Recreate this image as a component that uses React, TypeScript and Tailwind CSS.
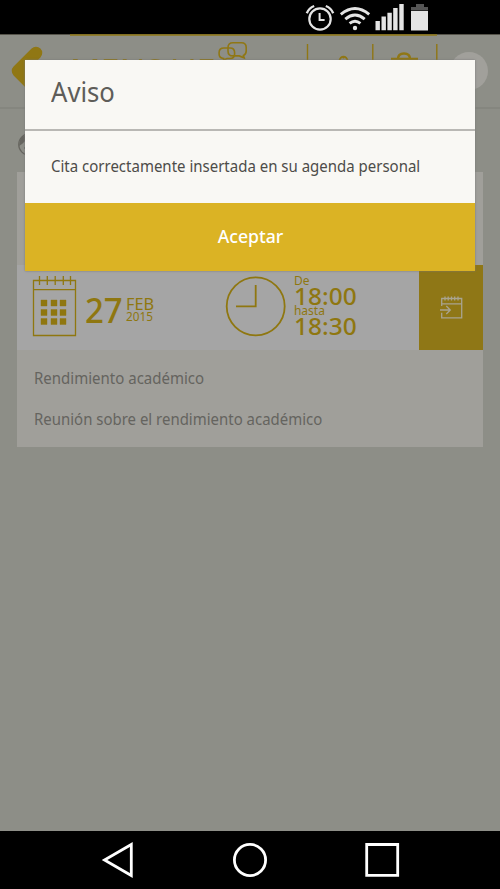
import type { ReactNode } from "react";

function Fit({ className, children }: { className: string; children: ReactNode }) {
  return <span className={"block w-max whitespace-nowrap " + className}>{children}</span>;
}

function StatusBar() {
  return (
    <div className="flex h-[34px] bg-black">
      <svg className="ml-[304px]" width="130" height="34" viewBox="304 0 130 34" fill="none" stroke="#e4e4e4">
        <circle cx="320" cy="19" r="10.7" strokeWidth="2.2" />
        <path d="M319.6 13v7h5" strokeWidth="2" />
        <path d="M306.8 13.2Q309 8 314.2 6M333.2 13.2Q331 8 325.8 6" strokeWidth="2.4" />
        <path d="M340.8 14.3Q355 2.5 369.2 14.3M345.3 19.2Q355 11 364.7 19.2M349.6 23.4Q355 19 360.4 23.4" strokeWidth="2.9" />
        <circle cx="355" cy="28" r="2.2" fill="#e4e4e4" stroke="none" />
        <path d="M375.5 21h4.4v9.3h-4.4zM381.5 16.5h4.4v13.8h-4.4zM387.4 12.7h4.4v17.6h-4.4zM393.2 8h4.4v22.3h-4.4zM399.3 4h4.4v26.3h-4.4z" fill="#e4e4e4" stroke="none" />
        <path d="M411 10.5V7h5V4h8v3h4v3.5z" fill="#555" stroke="none" />
        <path d="M411 11h17v19.5h-17z" fill="#e4e4e4" stroke="none" />
      </svg>
    </div>
  );
}

function Header() {
  return (
    <header className="relative h-[75px] border-b-2 border-[#85867f]">
      <svg className="block" width="500" height="73" viewBox="0 34 500 73" fill="none" stroke="#907714">
        <path d="M0 34.5h500" stroke="#55534a" />
        <path d="M70 35h367" strokeWidth="1.5" />
        <path d="M36 53L18 71L36 89" strokeWidth="12.5" strokeLinecap="round" strokeLinejoin="round" />
        <path d="M233 42.7h8.5q4.7 0 4.7 4.7v3.6q0 3.5-2.8 4.4l.8 2.4-5-1.9h-6.2q-5 0-5-5v-3.4q0-4.8 5-4.8z" strokeWidth="1.6" />
        <path d="M224 48h6q4.6 0 4.6 4.6v1.4q0 4.5-4.6 4.5h-3l-3.5 1.5v-1.5q-4.4-.5-4.4-4.5v-1.4q0-4.6 4.9-4.6z" strokeWidth="1.6" />
        <path d="M307.5 44v48M372.8 44v48M436.8 44v48" strokeWidth="1.4" />
        <path d="M339 61.5q1.5-4.8 4.5-4.8t4.5 4.8M343.5 57v1.5" strokeWidth="1.8" />
        <path d="M391 58.9h27M398 59q0-5.5 6-5.5t6 5.5" strokeWidth="2.4" />
        <circle cx="469" cy="71" r="19" fill="#a1a09b" stroke="none" />
      </svg>
      <Fit className="absolute left-[70px] top-[13px] origin-left scale-x-[1.06] text-[32px] text-[#907714]">MENSAJE</Fit>
    </header>
  );
}

function AvatarIcon() {
  return (
    <svg className="mt-[24px] ml-[18px] block shrink-0" width="23" height="23" viewBox="0 0 23 23" fill="none" stroke="#66655f">
      <circle cx="11.5" cy="11.5" r="10.8" strokeWidth="1.2" />
      <path d="M1 13Q1 2 11.5 1Q22 2 22 13Q18 10 16 5Q9 5 4 11z" fill="#66655f" stroke="none" />
      <path d="M6.5 15h1M15 15h1M8 18.5h7" stroke="#222" strokeWidth="1.2" />
    </svg>
  );
}

function CalendarIcon() {
  return (
    <svg className="mt-[10px] ml-[15px] shrink-0" width="46" height="62" viewBox="32 275 46 62" fill="none" stroke="#8f7710">
      <path d="M33.5 280.5h42v55h-42zM33.5 289.7h42" strokeWidth="1.3" />
      <path d="M39.5 276v9M47.3 276v9M55.2 276v9M63.3 276v9M70.5 276v9" strokeWidth="1.3" />
      <path d="M41 300h6v6h-6zM51 300h6v6h-6zM60 300h6v6h-6zM41 309.5h6v6h-6zM51 309.5h6v6h-6zM60 309.5h6v6h-6zM41 318.5h6v6h-6zM51 318.5h6v6h-6zM60 318.5h6v6h-6z" fill="#8f7710" stroke="#8f7710" strokeWidth=".4" />
    </svg>
  );
}

function Appointment() {
  return (
    <section className="mx-[17px] mt-[16px] h-[275px] w-[466px] shrink-0 bg-[#a09f9a]">
      <div className="h-[93px]" />
      <div className="flex h-[85px] bg-[#a5a5a5] text-[#8f7710]">
        <CalendarIcon />
        <Fit className="ml-[7px] mr-[2px] mt-[24px] origin-left scale-x-[.97] text-[34px] leading-[42px] font-medium">27</Fit>
        <div className="mt-[30px] w-[99px]">
          <Fit className="origin-left scale-x-[.96] text-[17px] leading-[18px]">FEB</Fit>
          <Fit className="origin-left scale-x-[.98] text-[12px] leading-[8px]">2015</Fit>
        </div>
        <svg className="mt-[10px] shrink-0" width="62" height="62" viewBox="225 275 62 62" fill="none" stroke="#8f7710" strokeWidth="1.8">
          <circle cx="255.7" cy="306.3" r="29" />
          <path d="M255.7 285v21.3H236" />
        </svg>
        <div className="ml-[7px] mt-[9px]">
          <Fit className="text-[12px] leading-[13px]">De</Fit>
          <Fit className="origin-left scale-x-[1.02] text-[24px] leading-[18px] font-medium">18:00</Fit>
          <Fit className="text-[12px] leading-[12px]">hasta</Fit>
          <Fit className="origin-left scale-x-[1.02] text-[24px] leading-[18px] font-medium">18:30</Fit>
        </div>
        <div className="ml-auto flex w-[64px] items-center justify-center bg-[#8f7716]">
          <svg className="ml-[2px]" width="24" height="24" viewBox="440 295 24 24" fill="none" stroke="#a9a490" strokeWidth="1.3">
            <path d="M441.7 305v-7.5h20v19.3h-20v-5M441.7 302.8h20M445 295.5v4M448.2 295.5v4M451.5 295.5v4M454.7 295.5v4M458 295.5v4M440 309h10M446.3 305l4 4-4 4" />
          </svg>
        </div>
      </div>
      <div className="pt-[17px] pl-[17px] text-[16px] leading-[22px] text-[#65645f]">
        <Fit className="origin-left scale-x-[.938]">Rendimiento académico</Fit>
        <Fit className="mt-[19px] origin-left scale-x-[.935]">Reunión sobre el rendimiento académico</Fit>
      </div>
    </section>
  );
}

function Dialog() {
  return (
    <div className="absolute left-[25px] top-[60px] h-[211px] w-[450px] bg-[#f9f8f4] shadow-[0_0_2px_#777]">
      <div className="h-[71px] border-b-2 border-[#b9b8b4] pt-[14px] pl-[26px] text-[27px] leading-[36px] text-[#5e5d59]">
        <Fit className="origin-left scale-x-[.95]">Aviso</Fit>
      </div>
      <div className="h-[72px] pt-[24px] pl-[26px] text-[16px] leading-[22px] text-[#4d4c49]">
        <Fit className="origin-left scale-x-[.937]">Cita correctamente insertada en su agenda personal</Fit>
      </div>
      <button className="flex h-[68px] w-full items-center justify-center bg-[#dbb324] pb-[1px] text-[18px] font-medium text-white">
        <Fit className="scale-x-[.98]">Aceptar</Fit>
      </button>
    </div>
  );
}

function NavBar() {
  return (
    <nav className="mt-auto flex h-[58px] bg-black">
      <svg width="500" height="58" viewBox="0 831 500 58" fill="none" stroke="#fff" strokeWidth="2.8">
        <path d="M131.3 844.5v31L104.5 860z" />
        <circle cx="250" cy="860" r="15.6" />
        <path d="M366.7 844.5h31v30.8h-31z" />
      </svg>
    </nav>
  );
}

export default function App() {
  return (
    <div className="relative flex h-[889px] w-[500px] flex-col overflow-hidden bg-[#8d8e87] font-['Noto_Sans',sans-serif]">
      <StatusBar />
      <Header />
      <AvatarIcon />
      <Appointment />
      <Dialog />
      <NavBar />
    </div>
  );
}
